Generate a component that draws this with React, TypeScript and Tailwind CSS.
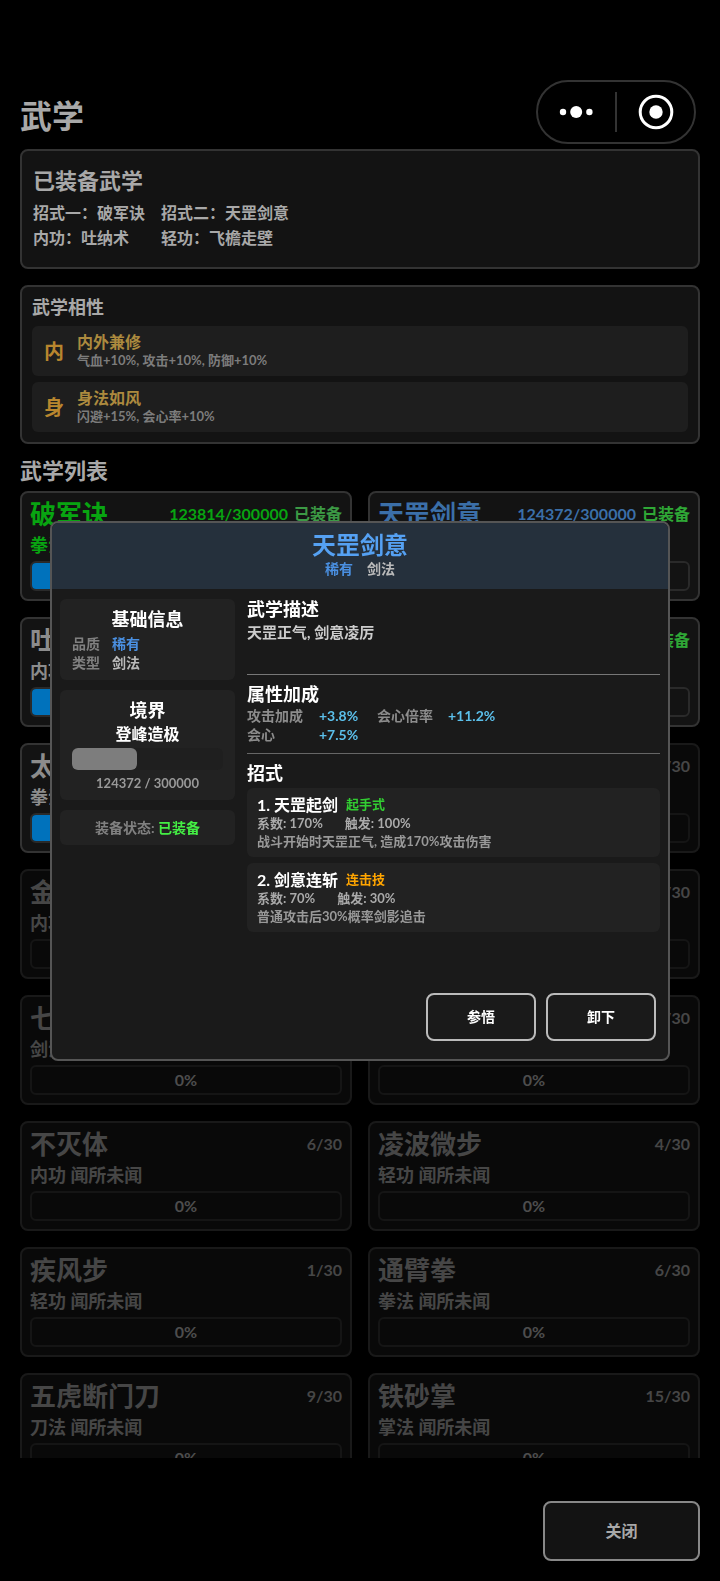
import React from 'react';
import clsx from 'clsx';

interface Skill {
  name: string;
  kind: string;
  stage: string;
  count: string;
  progress: number;
  equipped?: boolean;
  locked?: boolean;
  nameColor?: string;
  countColor?: string;
  kindColor?: string;
  badgeColor?: string;
}

const skills: Skill[] = [
  { name: '破军诀', kind: '拳法', stage: '登峰造极', count: '123814/300000', progress: 41, equipped: true, nameColor: 'text-[#08a411]', countColor: 'text-[#08a411]', kindColor: 'text-[#08a411]', badgeColor: 'text-[#3c9a45]' },
  { name: '天罡剑意', kind: '剑法', stage: '登峰造极', count: '124372/300000', progress: 41, equipped: true, nameColor: 'text-[#3b6fa8]', countColor: 'text-[#3b6fa8]', kindColor: 'text-[#3b6fa8]' },
  { name: '吐纳术', kind: '内功', stage: '登峰造极', count: '120000/300000', progress: 40, equipped: true },
  { name: '飞檐走壁', kind: '轻功', stage: '登峰造极', count: '120000/300000', progress: 40, equipped: true },
  { name: '太祖长拳', kind: '拳法', stage: '初窥门径', count: '120/300', progress: 40 },
  { name: '清风剑法', kind: '剑法', stage: '闻所未闻', count: '8/30', progress: 0, locked: true },
  { name: '金钟罩', kind: '内功', stage: '闻所未闻', count: '7/30', progress: 0, locked: true },
  { name: '罗汉拳', kind: '拳法', stage: '闻所未闻', count: '5/30', progress: 0, locked: true },
  { name: '七星剑', kind: '剑法', stage: '闻所未闻', count: '3/30', progress: 0, locked: true },
  { name: '开山掌', kind: '掌法', stage: '闻所未闻', count: '2/30', progress: 0, locked: true },
  { name: '不灭体', kind: '内功', stage: '闻所未闻', count: '6/30', progress: 0, locked: true },
  { name: '凌波微步', kind: '轻功', stage: '闻所未闻', count: '4/30', progress: 0, locked: true },
  { name: '疾风步', kind: '轻功', stage: '闻所未闻', count: '1/30', progress: 0, locked: true },
  { name: '通臂拳', kind: '拳法', stage: '闻所未闻', count: '6/30', progress: 0, locked: true },
  { name: '五虎断门刀', kind: '刀法', stage: '闻所未闻', count: '9/30', progress: 0, locked: true },
  { name: '铁砂掌', kind: '掌法', stage: '闻所未闻', count: '15/30', progress: 0, locked: true },
];

const affinities = [
  { icon: '内', title: '内外兼修', effect: '气血+10%, 攻击+10%, 防御+10%' },
  { icon: '身', title: '身法如风', effect: '闪避+15%, 会心率+10%' },
];

const moves = [
  { title: '1. 天罡起剑', tag: '起手式', tagColor: 'text-[#32cd32]', factor: '170%', trigger: '100%', desc: '战斗开始时天罡正气, 造成170%攻击伤害' },
  { title: '2. 剑意连斩', tag: '连击技', tagColor: 'text-[#ffa500]', factor: '70%', trigger: '30%', desc: '普通攻击后30%概率剑影追击' },
];

function SkillCard({ skill }: { skill: Skill }) {
  return (
    <div
      className={clsx(
        'rounded-lg border-2 border-[#333333] bg-[#131313] px-2 pt-1.5 pb-2',
        skill.locked && 'opacity-50'
      )}
    >
      <div className="flex items-center justify-between">
        <h3 className={clsx('text-[26px] leading-[30px] font-bold whitespace-nowrap', skill.nameColor ?? 'text-[#8c8c8c]')}>
          {skill.name}
        </h3>
        <div className="flex gap-1.5 text-base leading-6 font-bold whitespace-nowrap">
          <span className={skill.countColor ?? 'text-[#8c8c8c]'}>{skill.count}</span>
          {skill.equipped && <span className={skill.badgeColor ?? 'text-[#2fa836]'}>已装备</span>}
        </div>
      </div>
      <p className={clsx('mt-1 text-lg leading-6 font-bold', skill.kindColor ?? 'text-[#8c8c8c]')}>
        {skill.kind} {skill.stage}
      </p>
      <div
        role="progressbar"
        aria-label={skill.name}
        aria-valuenow={skill.progress}
        className="mt-1 grid h-[30px] rounded-md border-2 border-[#2a2a2a]"
      >
        <div className="col-start-1 row-start-1 rounded-sm bg-[#0072bc]" style={{ width: `${skill.progress}%` }} />
        <span className="col-start-1 row-start-1 text-center text-base leading-[26px] font-bold text-[#9a9a9a]">
          {skill.progress}%
        </span>
      </div>
    </div>
  );
}

function Capsule() {
  return (
    <div className="mr-1 flex h-16 w-40 items-center rounded-full border-2 border-[#333333]">
      <button aria-label="更多" className="flex flex-1 justify-center">
        <svg width="36" height="14" viewBox="0 0 36 14" fill="white">
          <circle cx="4" cy="7" r="3.2" />
          <circle cx="17.2" cy="7" r="6" />
          <circle cx="30.4" cy="7" r="3.2" />
        </svg>
      </button>
      <div className="h-10 w-0.5 bg-[#333333]" />
      <button aria-label="退出" className="flex flex-1 justify-center">
        <svg width="36" height="36" viewBox="0 0 36 36">
          <circle cx="18" cy="18" r="15.8" fill="none" stroke="white" strokeWidth="3" />
          <circle cx="18" cy="18" r="6.7" fill="white" />
        </svg>
      </button>
    </div>
  );
}

function SkillDialog() {
  return (
    <div className="fixed inset-0 flex items-center justify-center px-[50px]">
      <div
        role="dialog"
        aria-label="天罡剑意"
        className="flex min-h-[540px] w-full max-w-[620px] flex-col overflow-hidden rounded-lg border-2 border-[#555555] bg-[#1a1a1a]"
      >
        <header className="bg-[#25303c] pt-[7px] pb-[11px] text-center">
          <h2 className="text-2xl leading-[30px] font-bold text-[#55a1f3]">天罡剑意</h2>
          <div className="flex justify-center gap-3.5 text-sm leading-[18px] font-bold">
            <span className="text-[#4a90e2]">稀有</span>
            <span className="text-[#bbbbbb]">剑法</span>
          </div>
        </header>

        <div className="flex flex-1 gap-3 px-2 pt-2.5">
          <aside className="flex w-[175px] flex-col gap-2.5">
            <section className="rounded-md bg-[#222222] px-3 pt-2 pb-2">
              <h3 className="text-center text-lg leading-6 font-bold text-white">基础信息</h3>
              <dl className="mt-[3px] grid grid-cols-[28px_1fr] gap-x-3 text-sm leading-[19px] font-bold">
                <dt className="text-[#808080]">品质</dt>
                <dd className="text-[#4a90e2]">稀有</dd>
                <dt className="text-[#808080]">类型</dt>
                <dd className="text-[#bbbbbb]">剑法</dd>
              </dl>
            </section>

            <section className="rounded-md bg-[#222222] px-3 pt-2 pb-2 text-center">
              <h3 className="text-lg leading-6 font-bold text-white">境界</h3>
              <p className="text-base leading-6 font-bold text-white">登峰造极</p>
              <div role="progressbar" aria-label="境界" aria-valuenow={43} className="mt-0.5 h-[22px] rounded-md bg-[#1f1f1f]">
                <div className="h-full rounded-md bg-[#7d7d7d]" style={{ width: '43%' }} />
              </div>
              <p className="mt-1 text-[13px] leading-[18px] font-bold text-[#999999]">124372 / 300000</p>
            </section>

            <p className="rounded-md bg-[#222222] py-2 text-center text-sm leading-[19px] font-bold text-[#808080]">
              装备状态: <span className="text-[#44ee44]">已装备</span>
            </p>
          </aside>

          <div className="flex-1">
            <section className="h-[76px] border-b border-[#777777]">
              <h3 className="text-lg leading-5 font-bold text-white">武学描述</h3>
              <p className="text-[15px] leading-[26px] font-bold text-[#cccccc]">天罡正气, 剑意凌厉</p>
            </section>

            <section className="h-[79px] border-b border-[#666666] pt-[7px]">
              <h3 className="text-lg leading-6 font-bold text-white">属性加成</h3>
              <dl className="grid grid-cols-[72px_58px_71px_1fr] text-sm leading-[19px] font-bold">
                <dt className="text-[#8c8c8c]">攻击加成</dt>
                <dd className="text-[#5bbfea]">+3.8%</dd>
                <dt className="text-[#8c8c8c]">会心倍率</dt>
                <dd className="text-[#5bbfea]">+11.2%</dd>
                <dt className="text-[#8c8c8c]">会心</dt>
                <dd className="text-[#5bbfea]">+7.5%</dd>
              </dl>
            </section>

            <section className="pt-[7px]">
              <h3 className="text-lg leading-6 font-bold text-white">招式</h3>
              <div className="mt-[3px] flex flex-col gap-1.5">
                {moves.map((move) => (
                  <div key={move.title} className="rounded-md bg-[#222222] px-2.5 py-[7px] text-[13px] leading-[18px] font-bold">
                    <div className="flex items-center gap-2">
                      <h4 className="text-base leading-[19px] text-white">{move.title}</h4>
                      <span className={move.tagColor}>{move.tag}</span>
                    </div>
                    <div className="flex gap-[22px] text-[#aaaaaa]">
                      <span>系数: {move.factor}</span>
                      <span>触发: {move.trigger}</span>
                    </div>
                    <p className="text-[#999999]">{move.desc}</p>
                  </div>
                ))}
              </div>
            </section>
          </div>
        </div>

        <footer className="flex justify-end gap-2.5 px-3 pt-4 pb-[18px]">
          <button className="h-12 w-[110px] rounded-lg border-2 border-[#bbbbbb] text-sm font-bold text-white">参悟</button>
          <button className="h-12 w-[110px] rounded-lg border-2 border-[#bbbbbb] text-sm font-bold text-white">卸下</button>
        </footer>
      </div>
    </div>
  );
}

export default function App() {
  return (
    <div className="flex h-screen flex-col bg-black px-5 pt-20 pb-5 font-['Lato','Noto_Sans_CJK_SC',sans-serif] text-[#a8a8a8]">
      <header className="flex items-center justify-between">
        <h1 className="pt-2 text-[32px] leading-10 font-bold">武学</h1>
        <Capsule />
      </header>

      {/* Equipped skills */}
      <section className="mt-[5px] rounded-lg border-2 border-[#333333] bg-[#131313] px-[11px] pt-[15px] pb-[17px]">
        <h2 className="text-[22px] leading-[30px] font-bold">已装备武学</h2>
        <div className="mt-1 grid grid-cols-[128px_1fr] text-base leading-[25px] font-bold whitespace-nowrap">
          <span>招式一：破军诀</span>
          <span>招式二：天罡剑意</span>
          <span>内功：吐纳术</span>
          <span>轻功：飞檐走壁</span>
        </div>
      </section>

      {/* Affinity bonuses */}
      <section className="mt-4 rounded-lg border-2 border-[#333333] bg-[#131313] px-2.5 pt-2 pb-2.5">
        <h2 className="text-lg leading-6 font-bold">武学相性</h2>
        <div className="mt-[7px] flex flex-col gap-1.5">
          {affinities.map((item) => (
            <div key={item.title} className="flex items-center gap-[13px] rounded-md bg-[#1e1e1e] px-3 py-[7px]">
              <span className="text-xl leading-6 font-bold text-[#b8862e]">{item.icon}</span>
              <div>
                <h3 className="text-base leading-[18px] font-bold text-[#ac8a3e]">{item.title}</h3>
                <p className="text-[13px] leading-[18px] font-bold text-[#7c7c7c]">{item.effect}</p>
              </div>
            </div>
          ))}
        </div>
      </section>

      <h2 className="mt-3 mb-[5px] text-[22px] leading-[30px] font-bold">武学列表</h2>
      <div className="min-h-0 flex-1 overflow-hidden">
        <div className="grid grid-cols-2 gap-4">
          {skills.map((skill) => (
            <SkillCard key={skill.name} skill={skill} />
          ))}
        </div>
      </div>

      <footer className="mt-[43px] flex justify-end">
        <button className="h-[60px] w-[157px] rounded-lg border-2 border-[#888888] bg-[#131313] text-base font-bold">关闭</button>
      </footer>

      <SkillDialog />
    </div>
  );
}
